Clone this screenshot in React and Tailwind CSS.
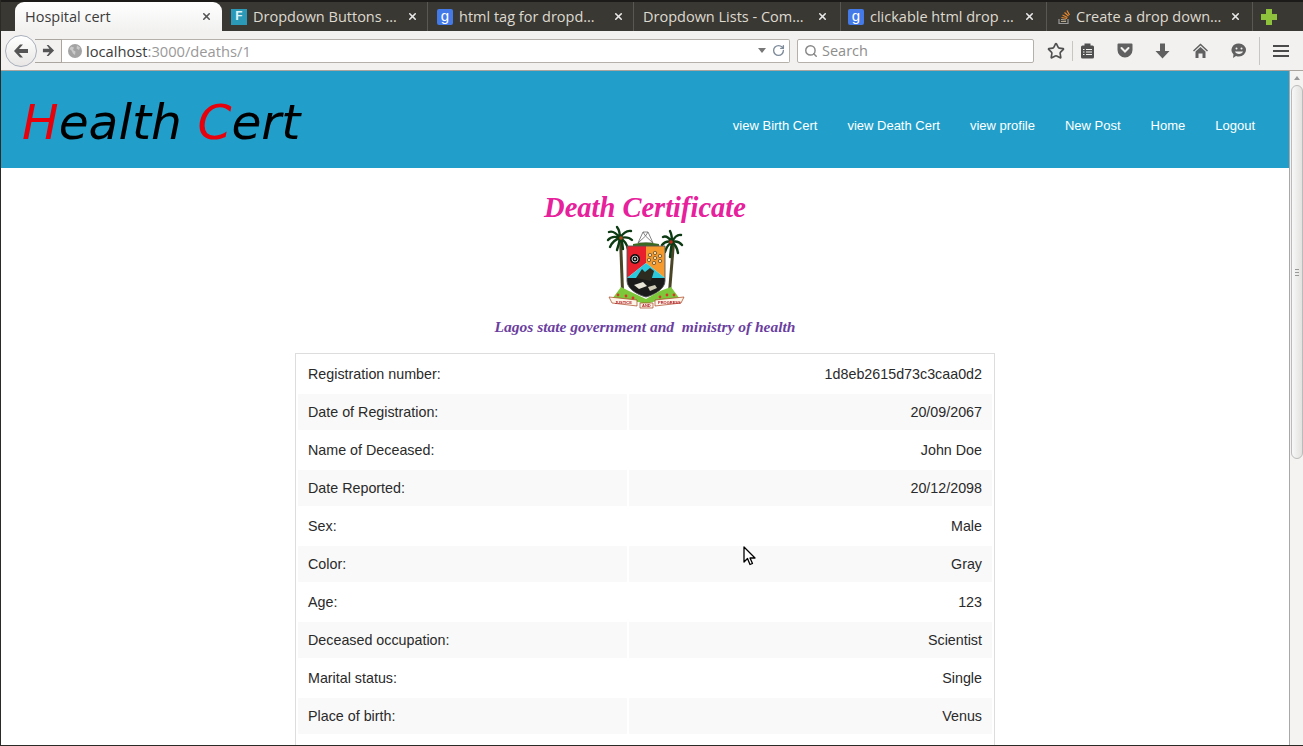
import { RotateCw, Search, Star, X } from 'lucide-react';

const rows = [
  ['Registration number:', '1d8eb2615d73c3caa0d2'],
  ['Date of Registration:', '20/09/2067'],
  ['Name of Deceased:', 'John Doe'],
  ['Date Reported:', '20/12/2098'],
  ['Sex:', 'Male'],
  ['Color:', 'Gray'],
  ['Age:', '123'],
  ['Deceased occupation:', 'Scientist'],
  ['Marital status:', 'Single'],
  ['Place of birth:', 'Venus'],
  ['\u00a0', '\u00a0'],
];

const navLinks = ['view Birth Cert', 'view Death Cert', 'view profile', 'New Post', 'Home', 'Logout'];

const tabs = [
  { title: 'Dropdown Buttons …', icon: 'f', box: 'w-[206px] pl-[9px] pr-[9px]' },
  { title: 'html tag for dropd…', icon: 'g', box: 'w-[206px] pl-[9px] pr-[9px]' },
  { title: 'Dropdown Lists - Com…', icon: null, box: 'w-[207px] pl-[9px] pr-[12px]' },
  { title: 'clickable html drop …', icon: 'g', box: 'w-[206px] pl-[7px] pr-[11px]' },
  { title: 'Create a drop down…', icon: 'so', box: 'w-[206px] pl-[9px] pr-[11px]' },
];

function Favicon({ type }) {
  if (type === 'f') {
    return (
      <span className="w-4 h-4 mr-[6px] bg-[#2b9ab8] flex items-center justify-center text-[#dff3f8] text-[13px] font-bold leading-none shrink-0 font-['Liberation_Mono',monospace]">
        F
      </span>
    );
  }
  if (type === 'g') {
    return (
      <span className="w-4 h-4 mr-[6px] rounded-[2px] bg-[#4479e8] flex items-center justify-center text-white text-[15px] leading-none pb-[3px] shrink-0 font-['Liberation_Sans',sans-serif]">
        g
      </span>
    );
  }
  if (type === 'so') {
    return (
      <svg className="w-4 h-4 mr-[4px] shrink-0" viewBox="0 0 16 16" fill="none">
        <path d="M3 10v4.500h9V10" stroke="#9a9a9a" strokeWidth="1.200" />
        <path d="M5 12.500h5M5 10.500l5 .5" stroke="#b5a68e" strokeWidth="1.200" />
        <path d="M5.500 8.500l5.500 1M6.500 6l5 2.500M8.500 3.500l4 3.500M11 1.500l2.500 4.500" stroke="#e8882c" strokeWidth="1.200" />
      </svg>
    );
  }
  return null;
}

function Crest() {
  return (
    <svg className="w-[90px] h-[85px] block blur-[0.4px]" viewBox="0 0 90 85">
      {/* palm trunks */}
      <path d="M19 14 L21 66 L24 66 L22 14Z" fill="#4a4526" />
      <path d="M72 18 L68 67 L71 67 L75 18Z" fill="#4a4526" />
      {/* fronds */}
      <g stroke="#0c3a12" strokeWidth="2.400" fill="none" strokeLinecap="round">
        <path d="M20 13 Q14 5 9 7M20 13 Q12 10 8 15M20 13 Q13 15 10 22M20 13 Q20 6 17 2M20 13 Q25 5 31 6M20 13 Q28 11 32 15M20 13 Q26 16 28 24M20 13 Q19 19 17 25M20 13 Q23 18 23 24" />
        <path d="M72 17 Q67 10 63 12M72 17 Q66 15 62 20M72 17 Q67 20 65 27M72 17 Q72 10 70 6M72 17 Q76 9 81 10M72 17 Q78 15 82 20M72 17 Q77 21 78 28M72 17 Q71 23 70 32" />
      </g>
      <circle cx="21" cy="13" r="1.800" fill="#b0481c" />
      <circle cx="71" cy="17" r="1.800" fill="#c22a1e" />
      {/* helmet */}
      <path d="M38 18 L43 7 L48 7 L53 18Z" fill="#fff" stroke="#666" strokeWidth="0.800" />
      <path d="M38 18 L45.500 11 L53 18M43 7 L45.500 11 L48 7" fill="none" stroke="#666" strokeWidth="0.800" />
      <path d="M33 19 Q46 16 59 19 L59 21 H33Z" fill="#3a6a20" />
      {/* shield */}
      <path d="M27 21 H46 V38 L27 53Z" fill="#e8202e" />
      <path d="M46 21 H65 V53 L46 38Z" fill="#f59a2e" />
      <path d="M27 53 L46 38 L65 53Z" fill="#2cc8dc" />
      <path d="M27 53 H65 V56 C65 64 54 70 46 72 C38 70 27 64 27 56Z" fill="#1b1b1b" />
      <path d="M27 21 H65 V56 C65 64 54 70 46 72 C38 70 27 64 27 56Z" fill="none" stroke="#555" strokeWidth="0.900" />
      <circle cx="35" cy="34" r="5" fill="#111" />
      <circle cx="35" cy="34" r="3" fill="none" stroke="#ddd" strokeWidth="0.900" />
      <circle cx="35" cy="34" r="1.100" fill="#ddd" />
      <g fill="#f4d6a4" stroke="#5a4020" strokeWidth="0.700">
        <circle cx="50" cy="30" r="1.700" />
        <circle cx="55" cy="28" r="1.700" />
        <circle cx="60" cy="31" r="1.700" />
        <circle cx="49" cy="35" r="1.700" />
        <circle cx="55" cy="33" r="1.700" />
        <circle cx="60" cy="36" r="1.700" />
        <circle cx="54" cy="38" r="1.700" />
      </g>
      <path d="M36 53 L42 44 L45 47 L50 43 L54 46 L51 56Z" fill="#2d2a20" />
      <path d="M34 60 L43 57 L47 61 L39 64Z" fill="#e8e4d8" />
      <path d="M48 62 L55 60 L57 63 L50 66Z" fill="#cfcab8" />
      {/* ground */}
      <path d="M12 74 L21 62 L29 66 L46 74 L60 66 L71 62 L80 74 L60 75 L46 79 L30 75Z" fill="#7cc83a" />
      <circle cx="18" cy="70" r="1.400" fill="#d8382a" />
      <circle cx="26" cy="71" r="1.400" fill="#d8382a" />
      <circle cx="33" cy="73" r="1.400" fill="#d8382a" />
      <circle cx="60" cy="72" r="1.400" fill="#d8382a" />
      <circle cx="67" cy="70" r="1.400" fill="#d8382a" />
      <circle cx="74" cy="70" r="1.400" fill="#d8382a" />
      {/* ribbons */}
      <path d="M9 72 L37 75 L37 81 L12 78Z" fill="#fdf6e8" stroke="#a8401c" strokeWidth="0.700" />
      <path d="M40 78 L53 78 L53 83 L40 83Z" fill="#fdf6e8" stroke="#a8401c" strokeWidth="0.700" />
      <path d="M55 75 L84 72 L81 78 L55 81Z" fill="#fdf6e8" stroke="#a8401c" strokeWidth="0.700" />
      <g fontFamily="Liberation Sans" fontSize="4" fontWeight="700" fill="#b3202a">
        <text x="15" y="78.500">JUSTICE</text>
        <text x="42" y="82">AND</text>
        <text x="58" y="78.500">PROGRESS</text>
      </g>
    </svg>
  );
}

function App() {
  return (
    <div className="w-[1303px] h-[746px] overflow-hidden flex flex-col bg-white border border-[#2b2a27] border-t-0 border-r-0 font-['Liberation_Sans',sans-serif]">
      {/* tab strip */}
      <div className="h-[31px] shrink-0 bg-[#3a3833] border-t-2 border-[#1c1b19] flex items-end pl-[14px] font-['Open_Sans',sans-serif] text-[14.500px]">
        <div className="w-[207px] h-[29px] rounded-t-[9px] flex items-center pl-[10px] pr-[10px] text-[#3c3c3c] bg-gradient-to-b from-[#ffffff] to-[#f2f1f0]">
          <span className="flex-1 truncate pt-[1px]">Hospital cert</span>
          <X size={11} strokeWidth={3.500} className="text-[#555]" />
        </div>
        {tabs.map((tab) => (
          <div key={tab.title} className={`${tab.box} h-[29px] flex items-center border-r border-[#5a5852] text-[#dedad0]`}>
            <Favicon type={tab.icon} />
            <span className="flex-1 whitespace-nowrap overflow-hidden pt-[1px]">{tab.title}</span>
            <X size={11} strokeWidth={3.500} className="text-[#e8e8e8] shrink-0" />
          </div>
        ))}
        <div className="h-[29px] flex items-center pl-[7px]">
          <svg className="w-[18px] h-[18px]" viewBox="0 0 18 18">
            <path d="M6 1h6v5h5v6h-5v5H6v-5H1V6h5z" fill="#8fc23c" />
          </svg>
        </div>
      </div>

      {/* toolbar */}
      <div className="h-[40px] shrink-0 bg-[#f2f1f0] border-b border-[#aaa69f] flex items-center pl-[4px] font-['Open_Sans',sans-serif]">
        <div className="w-[32px] h-[32px] rounded-full bg-gradient-to-b from-white to-[#e8e7e5] border border-[#a9b0bb] flex items-center justify-center z-10 shrink-0">
          <svg className="w-[18px] h-[18px]" viewBox="0 0 18 18">
            <path d="M8 2.500L2 9l6 6.500h3L7 11h9V7H7l4-4.500z" fill="#555" />
          </svg>
        </div>
        <div className="w-[27px] h-[24px] -ml-[2px] bg-[#f2f1f0] border border-l-0 border-[#aaa69f] flex items-center justify-center shrink-0">
          <svg className="w-[13px] h-[13px]" viewBox="0 0 14 14">
            <path d="M7 1l6 6-6 6H5l3-4H1V5h7L5 1z" fill="#555" />
          </svg>
        </div>
        <div className="w-[728px] h-[24px] bg-white border border-l-0 border-[#b5b1aa] rounded-r-[2px] flex items-center pl-[6px] pr-[4px] text-[14.700px] shrink-0">
          <svg className="w-[14px] h-[14px] mr-[4px] shrink-0" viewBox="0 0 14 14">
            <circle cx="7" cy="7" r="7" fill="#a3a3a3" />
            <path d="M3 2.500l3 1-1 2.500 2.500 1.500-.5 3.500-2-1.500-1.500-3L1.500 5zM9 1.500l3 2-1 2.500-2.500-1.500z" fill="#c9c9c9" />
          </svg>
          <span className="flex-1 text-[#3c3c3c] pt-[1px]">
            localhost<span className="text-[#999]">:3000/deaths/1</span>
          </span>
          <span className="w-0 h-0 border-x-[4px] border-x-transparent border-t-[5px] border-t-[#777] mr-[6px]" />
          <RotateCw size={13} strokeWidth={2.500} className="text-[#7d8a99]" />
        </div>
        <div className="w-[237px] h-[24px] ml-[7px] bg-white border border-[#b5b1aa] rounded-[2px] flex items-center pl-[6px] text-[14.500px] text-[#8d8d8d] shrink-0">
          <Search size={14} strokeWidth={2.500} className="mr-[4px] text-[#888]" />
          <span className="pt-[1px]">Search</span>
        </div>
        <div className="flex items-center ml-[13px] text-[#505050]">
          <Star size={18} strokeWidth={2.200} className="mr-[7px]" />
          <span className="w-px h-[20px] bg-[#c8c6c2] mr-[7px]" />
          <svg className="w-[15px] h-[16px] mr-[22px]" viewBox="0 0 15 16">
            <rect x="1" y="2.500" width="13" height="13" rx="1.500" fill="#505050" />
            <rect x="4.500" y="0.500" width="6" height="3" fill="#505050" />
            <path d="M3 6.500h1.500M6 6.500h6M3 9h1.500M6 9h6M3 11.500h1.500M6 11.500h6" stroke="#f2f1f0" strokeWidth="1.100" />
          </svg>
          <svg className="w-[16px] h-[15px] mr-[22px]" viewBox="0 0 16 15">
            <path d="M0.500 1.500A1 1 0 0 1 1.500.5h13a1 1 0 0 1 1 1V7a7.500 7.500 0 0 1-15 0z" fill="#606060" />
            <path d="M4.500 5L8 8.500 11.500 5" fill="none" stroke="#f2f1f0" strokeWidth="2" strokeLinecap="round" />
          </svg>
          <svg className="w-[15px] h-[16px] mr-[23px]" viewBox="0 0 15 16">
            <path d="M5 0.500h5V8h4.500l-7 7.500-7-7.500H5z" fill="#606060" />
          </svg>
          <svg className="w-[15px] h-[15px] mr-[23px]" viewBox="0 0 15 15">
            <path d="M7.500 0.500L15 7.500l-1 1-6.500-6-6.500 6-1-1z" fill="#606060" />
            <path d="M7.500 4L12.500 8.500V15H9.500V10.500H5.500V15H2.500V8.500z" fill="#606060" />
          </svg>
          <svg className="w-[16px] h-[16px] mr-[12px]" viewBox="0 0 16 16">
            <path d="M8 0.500a7 6.500 0 0 1 0 13c-1 0-2 0-3-.5L2 15l.5-3.500A7 6.500 0 0 1 8 .5z" fill="#606060" />
            <circle cx="5.500" cy="5.500" r="1" fill="#f2f1f0" />
            <circle cx="10.500" cy="5.500" r="1" fill="#f2f1f0" />
            <path d="M4 8.500h8c-.5 1.500-2 2.500-4 2.500s-3.500-1-4-2.500z" fill="#f2f1f0" />
          </svg>
          <span className="w-px h-[28px] bg-[#c8c6c2] mr-[13px]" />
          <svg className="w-[16px] h-[14px]" viewBox="0 0 16 14">
            <path d="M0 2h16M0 7h16M0 12h16" stroke="#4a4a4a" strokeWidth="2.200" />
          </svg>
        </div>
      </div>

      {/* page + scrollbar */}
      <div className="flex-1 min-h-0 flex relative">
        <div className="flex-1 min-w-0 overflow-hidden">
          <header className="h-[97px] bg-[#219fca] flex items-center justify-between pl-[21px] pr-[19px]">
            <h1 className="text-[48.700px] leading-none italic text-black font-['DejaVu_Sans',sans-serif] mt-[6px]">
              <span className="text-[#e8000b]">H</span>ealth <span className="text-[#e8000b]">C</span>ert
            </h1>
            <nav className="flex text-[13px] text-white pt-[13px]">
              {navLinks.map((link) => (
                <a key={link} className="px-[15px]">{link}</a>
              ))}
            </nav>
          </header>

          <div className="flex flex-col items-center">
            <h2 className="mt-[22px] h-[35px] leading-[35px] text-[28.500px] font-bold italic text-[#e7209c] font-[cursive]">
              Death Certificate
            </h2>
            <Crest />
            <h3 className="mt-[4px] h-[26px] leading-[26px] text-[15.500px] font-bold italic text-[#6b3fa0] font-[cursive]">
              Lagos state government and&nbsp; ministry of health
            </h3>
            <table className="w-[700px] mt-[13px] border border-[#dddddd] border-separate border-spacing-[2px] text-[14.300px] text-[#2a2a2a]">
              <tbody>
                {rows.map(([label, value], i) => (
                  <tr key={i} className={i % 2 === 1 ? 'bg-[#f9f9f9]' : ''}>
                    <td className="h-[36px] w-[329px] p-0 px-[10px] pt-[2px]">{label}</td>
                    <td className="h-[36px] p-0 px-[10px] pt-[2px] text-right">{value}</td>
                  </tr>
                ))}
              </tbody>
            </table>
          </div>
        </div>

        {/* scrollbar */}
        <div className="w-[14px] shrink-0 bg-[#f4f3f2] border-l border-[#a8a8a8] flex flex-col items-center">
          <div className="h-[14px] flex items-center justify-center shrink-0">
            <span className="w-0 h-0 border-x-[3px] border-x-transparent border-b-[4px] border-b-[#999]" />
          </div>
          <div className="w-[12px] h-[374px] rounded-[6px] border border-[#bbb] bg-gradient-to-r from-[#f8f8f8] to-[#e2e1df] flex flex-col items-center justify-center gap-[2px]">
            <span className="w-[4px] h-px bg-[#999]" />
            <span className="w-[4px] h-px bg-[#999]" />
            <span className="w-[4px] h-px bg-[#999]" />
          </div>
        </div>

        {/* mouse pointer */}
        <svg className="absolute left-[742px] top-[475px] w-[14px] h-[21px]" viewBox="0 0 14 21">
          <path d="M1 1v15l3.500-3.500 2.500 6 2.500-1-2.500-5.500H12z" fill="#fff" stroke="#000" strokeWidth="1.300" strokeLinejoin="round" />
        </svg>
      </div>
    </div>
  );
}

export default App;
